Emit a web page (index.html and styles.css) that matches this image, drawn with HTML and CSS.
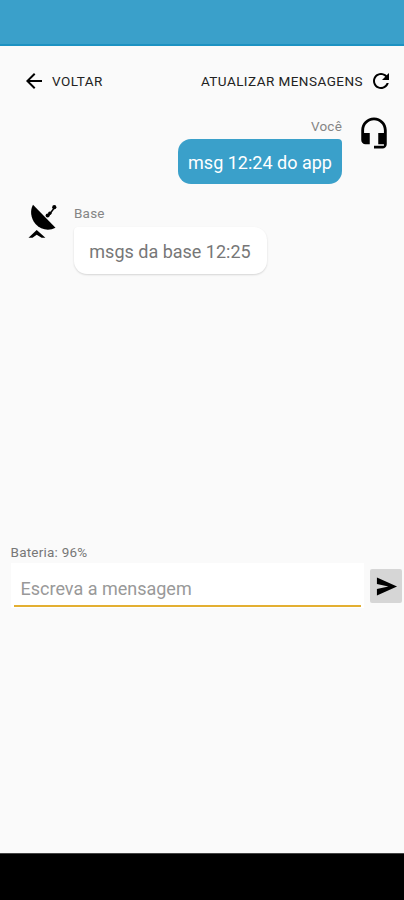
FILE: index.html
```html
<!DOCTYPE html>
<html lang="pt-BR">
<head>
<meta charset="utf-8">
<title>Mensagens</title>
<link rel="stylesheet" href="styles.css">
</head>
<body>
<div class="status"></div>
<main class="screen">
  <header class="toolbar">
    <div class="action">
      <svg width="24" height="24" viewBox="0 0 24 24"><path d="M20 11H7.83l5.59-5.59L12 4l-8 8 8 8 1.41-1.41L7.83 13H20v-2z"/></svg>
      <span class="back-label">VOLTAR</span>
    </div>
    <div class="action">
      <span class="refresh-label">ATUALIZAR MENSAGENS</span>
      <svg width="24" height="24" viewBox="0 0 24 24"><path d="M17.65 6.35C16.2 4.9 14.21 4 12 4c-4.42 0-7.99 3.58-7.99 8s3.57 8 7.99 8c3.73 0 6.84-2.55 7.73-6h-2.08c-.82 2.33-3.04 4-5.65 4-3.31 0-6-2.69-6-6s2.69-6 6-6c1.66 0 3.14.69 4.22 1.78L13 11h7V4l-2.35 2.35z"/></svg>
    </div>
  </header>
  <section class="chat">
    <div class="message sent">
      <div class="content">
        <div class="sender">Você</div>
        <div class="bubble"><span>msg 12:24 do app</span></div>
      </div>
      <svg class="headset" width="34" height="34" viewBox="0 0 24 24"><path d="M12 1c-4.97 0-9 4.03-9 9v7c0 1.66 1.34 3 3 3h3v-8H5v-2c0-3.87 3.13-7 7-7s7 3.13 7 7v2h-4v8h4v1h-7v2h6c1.66 0 3-1.34 3-3V10c0-4.97-4.03-9-9-9z"/></svg>
    </div>
    <div class="message received">
      <svg class="dish" width="30" height="36" viewBox="0 0 30 36"><path d="M4 .8C.8 6.500 1.600 14.200 6.500 20c5.300 6 13.500 7.200 20 3.800z"/><path d="M19.500 11.800l5.500-7.500" stroke="#000" stroke-width="1.500"/><circle cx="18.600" cy="11.600" r="2"/><circle cx="20.800" cy="9.200" r="1.700"/><circle cx="25.300" cy="3.200" r="2.100"/><path d="M-.5 33.700L7.700 26l8.700 7.700h-3.800L7.700 30.800l-4.200 2.900z"/></svg>
      <div class="content">
        <div class="sender">Base</div>
        <div class="bubble"><span>msgs da base 12:25</span></div>
      </div>
    </div>
  </section>
  <footer class="composer">
    <div class="battery">Bateria: 96%</div>
    <div class="entry">
      <div class="field"><div class="placeholder"><span>Escreva a mensagem</span></div></div>
      <div class="send"><svg width="23" height="23" viewBox="0 0 24 24"><path d="M2.010 21.500L23 12 2.010 2.500 2 9.500l12 2.500-12 2.500z"/></svg></div>
    </div>
  </footer>
</main>
<div class="navbar"></div>
</body>
</html>
```
FILE: styles.css
```css
* { box-sizing: border-box; }
body {
  margin: 0;
  width: 404px;
  height: 900px;
  display: flex;
  flex-direction: column;
  overflow: hidden;
  background: #fafafa;
  font-family: Roboto, "Liberation Sans", sans-serif;
}
svg { display: block; flex: none; overflow: visible; }
.status { height: 46px; background: #3aa0ca; border-bottom: 2px solid #1c92c2; }
.screen { flex: 1; display: flex; flex-direction: column; }
.navbar { height: 47px; background: #000; border-top: 1px solid #444; }
.toolbar {
  height: 70px;
  padding: 0 11px 0 22px;
  display: flex;
  align-items: center;
  justify-content: space-between;
}
.action { display: flex; align-items: center; gap: 6px; font-size: 13.500px; color: #222; white-space: nowrap; }
.back-label { letter-spacing: 0.500px; }
.refresh-label { letter-spacing: 0.460px; }
.chat { height: 427px; }
.message { display: flex; }
.sent { justify-content: flex-end; gap: 15px; padding: 1px 13px 0 0; height: 84px; }
.headset { margin-top: -1px; }
.received { gap: 15px; padding: 4px 0 0 29px; }
.sender { height: 22px; line-height: 19px; font-size: 13.500px; color: #858585; letter-spacing: 0.200px; }
.sent .sender { text-align: right; }
.bubble { display: flex; align-items: center; justify-content: center; padding-top: 2px; font-size: 18px; white-space: nowrap; }
.sent .bubble { width: 164px; height: 45px; border-radius: 13px 4px 13px 13px; background: #3aa0ca; color: #fff; }
.received .sender { height: 23px; }
.received .bubble {
  width: 193px;
  height: 47px;
  padding-right: 1px;
  border-radius: 4px 13px 13px 13px;
  background: #fff;
  color: #777;
  box-shadow: 0 1px 2px rgba(0, 0, 0, .15);
}
.battery { height: 20px; padding-left: 10.500px; line-height: 18px; font-size: 13.500px; letter-spacing: 0.220px; color: #777; }
.entry { display: flex; justify-content: space-between; padding: 0 2px 0 11px; }
.field { width: 353px; height: 45px; background: #fff; padding: 0 3px; }
.placeholder {
  height: 44px;
  display: flex;
  align-items: center;
  padding: 9px 0 0 6.500px;
  border-bottom: 2px solid #e3af32;
  font-size: 18px;
  color: #999;
}
.send {
  width: 32px;
  height: 34px;
  margin-top: 6px;
  border-radius: 2px;
  background: #d6d6d6;
  display: flex;
  align-items: center;
  justify-content: center;
}
```
